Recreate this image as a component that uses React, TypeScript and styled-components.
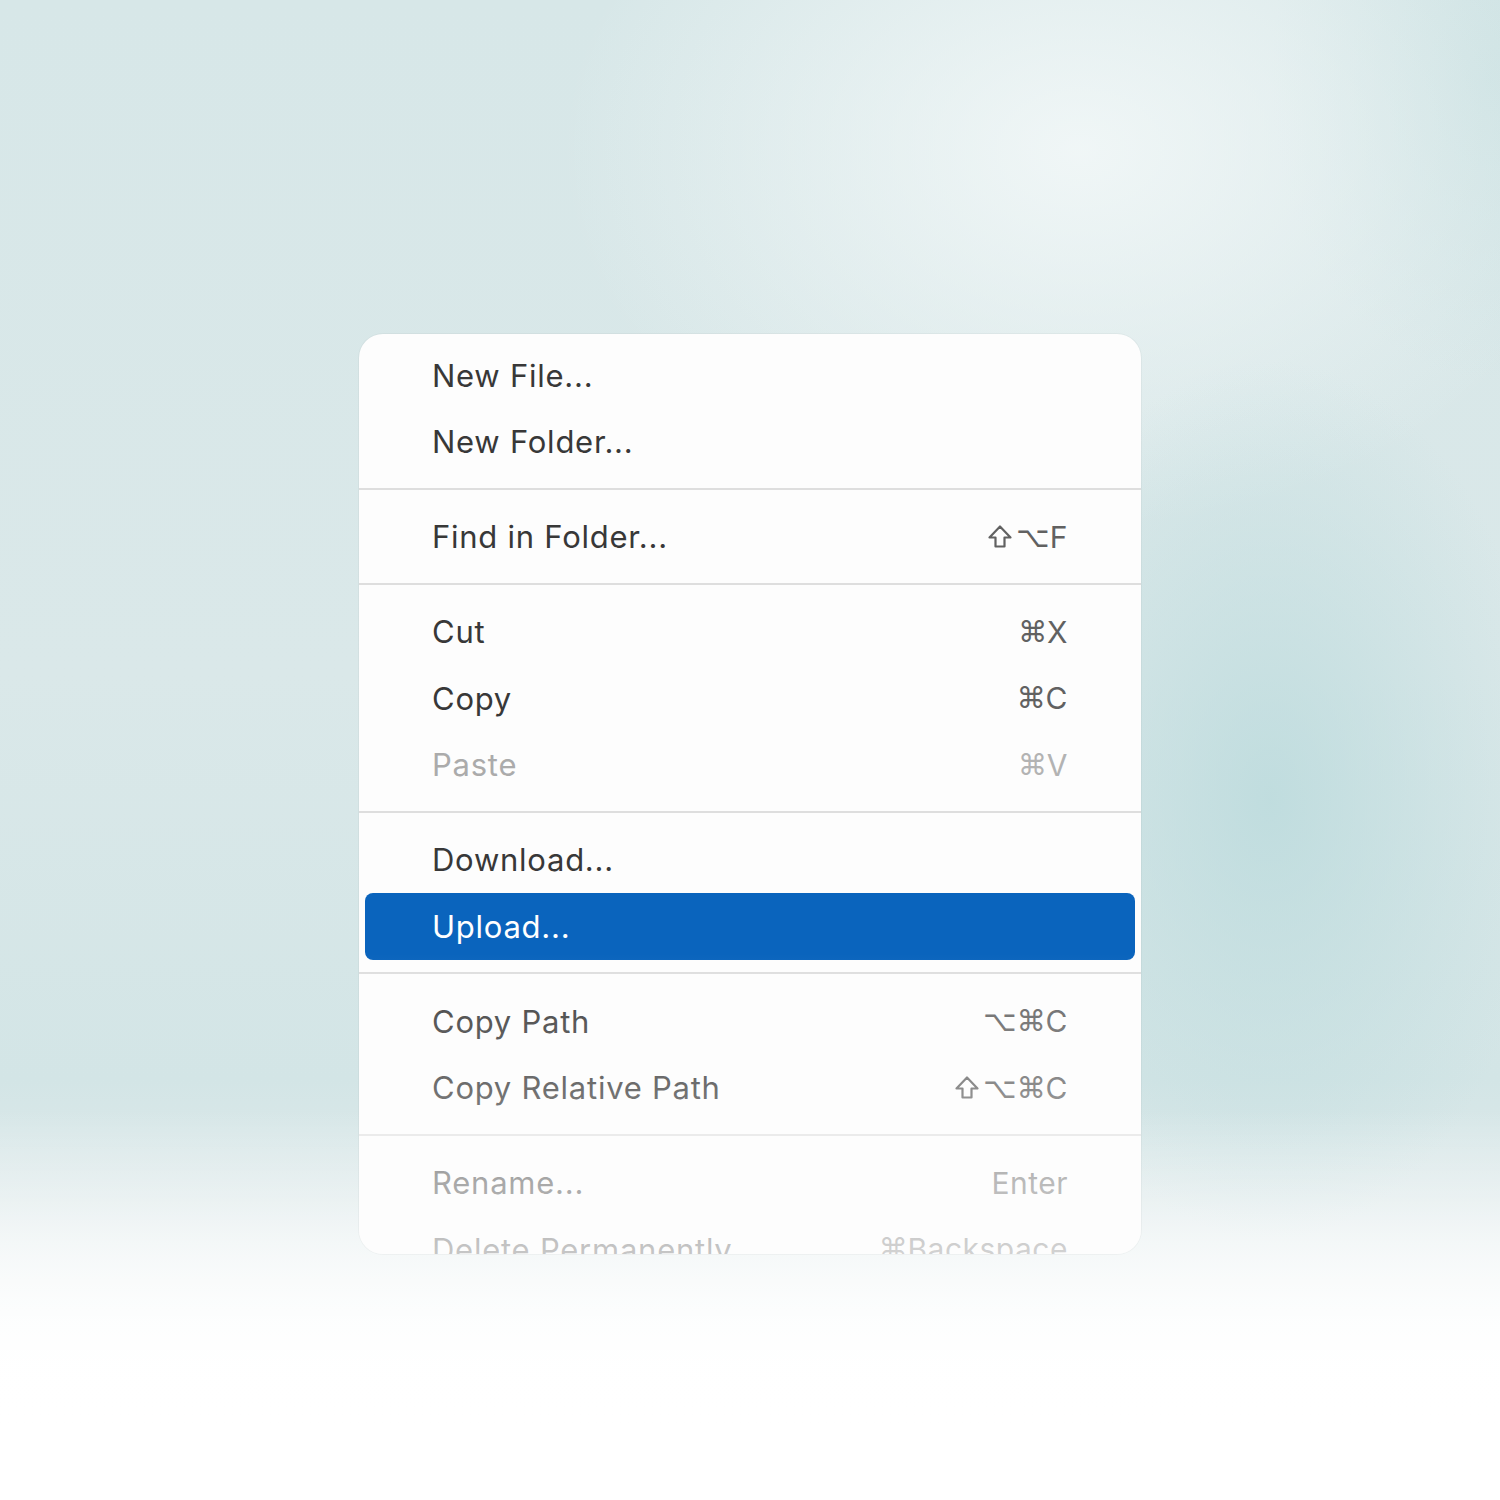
import React from "react";
import styled, { createGlobalStyle } from "styled-components";

const GlobalStyle = createGlobalStyle`
  html, body {
    margin: 0;
    padding: 0;
  }
  body {
    font-family: Inter, "Noto Sans", "DejaVu Sans", sans-serif;
    -webkit-font-smoothing: antialiased;
  }
`;

const Page = styled.div`
  width: 1500px;
  height: 1500px;
  overflow: hidden;
  display: flex;
  justify-content: center;
  align-items: flex-start;
  padding-top: 334px;
  box-sizing: border-box;
  background:
    linear-gradient(180deg, rgba(255, 255, 255, 0) 74%, rgba(255, 255, 255, 0.55) 83%, rgba(255, 255, 255, 0.95) 91%, #ffffff 96%),
    radial-gradient(ellipse 280px 440px at 1270px 800px, rgba(186, 218, 220, 0.8), rgba(186, 218, 220, 0) 100%),
    radial-gradient(ellipse 520px 380px at 1080px 150px, rgba(246, 250, 250, 0.8), rgba(246, 250, 250, 0) 100%),
    radial-gradient(ellipse 220px 300px at 1490px 80px, rgba(203, 225, 226, 0.95), rgba(203, 225, 226, 0) 100%),
    linear-gradient(180deg, #d7e7e8 0%, #dae8e9 45%, #d3e5e6 72%, #dfeaeb 80%, #f4f8f8 88%, #ffffff 95%);
`;

const Menu = styled.div`
  position: relative;
  width: 782px;
  height: 920px;
  background: #fdfdfd;
  border-radius: 24px;
  overflow: hidden;
  padding: 8px 6px 0;
  box-sizing: border-box;
  box-shadow: 0 0 0 1px rgba(0, 0, 0, 0.03);
`;

/* the list fades out toward the bottom edge of the menu */
const ScrollFade = styled.div`
  position: absolute;
  left: 0;
  right: 0;
  top: 620px;
  bottom: 0;
  pointer-events: none;
  background: linear-gradient(
    180deg,
    rgba(253, 253, 253, 0) 0%,
    rgba(253, 253, 253, 0.16) 22%,
    rgba(253, 253, 253, 0.27) 44%,
    rgba(253, 253, 253, 0.57) 76%,
    rgba(253, 253, 253, 0.72) 100%
  );
`;

const Row = styled.div<{ $active?: boolean; $disabled?: boolean }>`
  height: 66.5px;
  display: flex;
  align-items: center;
  justify-content: space-between;
  padding: 0 67px;
  border-radius: 8px;
  font-size: 31px;
  letter-spacing: 0.75px;
  background: ${(p) => (p.$active ? "#0a64bd" : "transparent")};
  color: ${(p) => (p.$active ? "#ffffff" : p.$disabled ? "#ababab" : "#383838")};
`;

const Keys = styled.span<{ $disabled?: boolean }>`
  display: flex;
  align-items: center;
  font-size: 30px;
  letter-spacing: 0.5px;
  color: ${(p) => (p.$disabled ? "#b3b3b3" : "#616161")};
`;

const Symbol = styled.span`
  font-family: "DejaVu Sans", sans-serif;
  font-size: 29px;
  letter-spacing: 0;
`;

const ShiftIcon = styled.svg`
  width: 26px;
  height: 25px;
  margin-right: 3px;
`;

const Separator = styled.div`
  height: 2px;
  background: #dedede;
  margin: 12.5px -6px 14px;
`;

type Item = { label: string; keys?: string; disabled?: boolean; active?: boolean };

const groups: Item[][] = [
  [{ label: "New File..." }, { label: "New Folder..." }],
  [{ label: "Find in Folder...", keys: "⇧⌥F" }],
  [
    { label: "Cut", keys: "⌘X" },
    { label: "Copy", keys: "⌘C" },
    { label: "Paste", keys: "⌘V", disabled: true },
  ],
  [{ label: "Download..." }, { label: "Upload...", active: true }],
  [
    { label: "Copy Path", keys: "⌥⌘C" },
    { label: "Copy Relative Path", keys: "⇧⌥⌘C" },
  ],
  [
    { label: "Rename...", keys: "Enter" },
    { label: "Delete Permanently", keys: "⌘Backspace" },
  ],
];

const Shift = () => (
  <ShiftIcon viewBox="0 0 26 25" fill="none">
    <path
      d="M13 2.5 L23.5 13.5 H17.5 V22.5 H8.5 V13.5 H2.5 Z"
      stroke="currentColor"
      strokeWidth="2.2"
      strokeLinejoin="round"
    />
  </ShiftIcon>
);

const renderKeys = (keys: string, disabled?: boolean) => {
  // modifier glyphs drawn separately, letters stay in the text font
  const parts = keys.match(/[⇧⌥⌘]|[^⇧⌥⌘]+/g) || [];
  return (
    <Keys $disabled={disabled}>
      {parts.map((p, i) =>
        p === "⇧" ? (
          <Shift key={i} />
        ) : /[⌥⌘]/.test(p) ? (
          <Symbol key={i}>{p}</Symbol>
        ) : (
          <span key={i}>{p}</span>
        )
      )}
    </Keys>
  );
};

const App = () => {
  return (
    <Page>
      <GlobalStyle />
      <Menu>
        {groups.map((group, gi) => (
          <React.Fragment key={gi}>
            {gi > 0 && <Separator />}
            {group.map((item) => (
              <Row key={item.label} $active={item.active} $disabled={item.disabled}>
                <span>{item.label}</span>
                {item.keys && renderKeys(item.keys, item.disabled)}
              </Row>
            ))}
          </React.Fragment>
        ))}
        <ScrollFade />
      </Menu>
    </Page>
  );
};

export default App;
